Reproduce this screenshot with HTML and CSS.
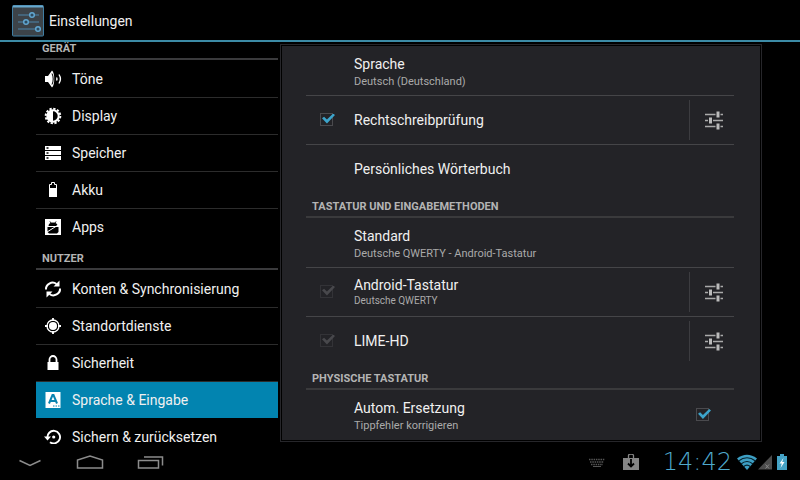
FILE: index.html
```html
<!doctype html>
<html lang="de">
<head>
    <meta charset="UTF-8">
    <meta name="viewport" content="width=device-width, initial-scale=1.0">
    <title>Einstellungen</title>

    <link rel="stylesheet" href="styles.css">
</head>
<body>
    <!-- Shared icon for the settings buttons -->
    <svg class="sprite" width="0" height="0" aria-hidden="true">
        <symbol id="sliders" viewBox="0 0 20 20">
            <path d="M1 4.5h10.500M16.500 4.500H19M1 10.500h3M9 10.500h10M1 16.500h10.500M16.500 16.500H19" stroke="#aaa" stroke-width="1.300"/>
            <path d="M14 1.500v6M6.500 7.500v6M14 13.500v6" stroke="#bbb" stroke-width="3"/>
        </symbol>
    </svg>

    <header class="action-bar">
        <svg class="app-icon" viewBox="0 0 32 32" aria-hidden="true">
            <rect x="0.500" y="0.500" width="31" height="30.500" rx="1" fill="#3c4349" stroke="#3f7ea3"/>
            <path d="M1 1.500h30" stroke="#68a9cd" stroke-width="2"/>
            <path d="M6 10h11M22 10h5M6 17h6M17 17h10M6 24h17" stroke="#4c86ab" stroke-width="1.200"/>
            <g fill="#2d4b60" stroke="#61a6d0" stroke-width="1.500">
                <circle cx="20" cy="10" r="2.300"/>
                <circle cx="14" cy="17" r="2.300"/>
                <circle cx="26" cy="24" r="2.300"/>
            </g>
        </svg>
        <h1>Einstellungen</h1>
    </header>

    <main>
        <nav class="sidebar">
            <h2 class="section-title">GERÄT</h2>
            <ul>
                <li><a href="#toene">
                    <svg class="icon" viewBox="0 0 18 18"><path d="M1 6h3l4-5.500c3 2 3 15 0 17L4 12H1z" fill="#fff"/><path d="M8 3.500c1.600 3 1.600 8 0 11" fill="none" stroke="#000"/><path d="M12.500 7.500c.6 1 .6 2 0 3M15 4.500c1.900 3 1.900 6 0 9" fill="none" stroke="#fff" stroke-width="1.400"/></svg>
                    Töne
                </a></li>
                <li><a href="#display">
                    <svg class="icon" viewBox="0 0 18 18"><circle cx="9" cy="9" r="7.300" fill="none" stroke="#fff" stroke-width="2" stroke-dasharray="2.300 1.522"/><circle cx="9" cy="9" r="5.700" fill="none" stroke="#fff" stroke-width="2"/><path d="M9 3a6 6 0 0 0 0 12z" fill="#fff"/></svg>
                    Display
                </a></li>
                <li><a href="#speicher">
                    <svg class="icon" viewBox="0 0 18 18"><path d="M1 2h16v4H1zM1 7h16v4H1zM1 12h16v4H1z" fill="#fff"/><path d="M2.500 4h2M2.500 9h2M2.500 14h2" stroke="#000" stroke-width="1.500"/></svg>
                    Speicher
                </a></li>
                <li><a href="#akku">
                    <svg class="icon" viewBox="0 0 18 18"><path d="M5.500 15.500v-12h2v-2h3v2h2v12z" fill="none" stroke="#fff"/><path d="M5 7h8v9H5z" fill="#fff"/></svg>
                    Akku
                </a></li>
                <li><a href="#apps">
                    <svg class="icon" viewBox="0 0 18 18"><path d="M1 1h16v16H1z" fill="#fff"/><path d="M4.500 8a4.500 3.500 0 0 1 9 0z" fill="#000"/><path d="M6 3.500l1.500 2M12 3.500l-1.500 2" stroke="#000"/><path d="M3.500 9h11v5l-1.500 1.500H5L3.500 14z" fill="#000"/><path d="M3 14L15 6.500" stroke="#fff"/></svg>
                    Apps
                </a></li>
            </ul>

            <h2 class="section-title">NUTZER</h2>
            <ul>
                <li><a href="#konten">
                    <svg class="icon" viewBox="0 0 18 18"><path d="M2 9.500C1.500 4.500 8 .5 12.500 4M16 8.500c.5 5-6 9-10.500 5.500" fill="none" stroke="#fff" stroke-width="2"/><path d="M15.500.5v6h-6zM2.500 17.500v-6h6z" fill="#fff"/></svg>
                    Konten &amp; Synchronisierung
                </a></li>
                <li><a href="#standort">
                    <svg class="icon" viewBox="0 0 18 18"><circle cx="9" cy="9" r="6" fill="none" stroke="#fff" stroke-width="1.300"/><circle cx="9" cy="9" r="4" fill="#fff"/><path d="M9 1v3M9 14v3M1 9h3M14 9h3" stroke="#fff" stroke-width="1.800"/></svg>
                    Standortdienste
                </a></li>
                <li><a href="#sicherheit">
                    <svg class="icon" viewBox="0 0 18 18"><path d="M3.500 8h11v8h-11z" fill="#fff"/><path d="M5.500 8V5.500a3.500 3.500 0 0 1 7 0V8" fill="none" stroke="#fff" stroke-width="1.800"/></svg>
                    Sicherheit
                </a></li>
                <li><a class="selected" href="#sprache" aria-current="page">
                    <svg class="icon" viewBox="0 0 18 18"><path d="M1.500 1h15v16h-15z" fill="#fff"/><path d="M5 12.500L8.500 4h1l3.500 8.500M6.500 10h5" fill="none" stroke="#0a84b0" stroke-width="2"/><path d="M9 15h1.500M11.500 15h1.500M14 15h1.500" stroke="#0a84b0"/></svg>
                    Sprache &amp; Eingabe
                </a></li>
                <li><a href="#sichern">
                    <svg class="icon" viewBox="0 0 18 18"><path d="M3.500 10A6.300 6.300 0 1 1 6 14.200" fill="none" stroke="#fff" stroke-width="1.900"/><path d="M0 8.500h7L3.500 12.500z" fill="#fff"/><circle cx="9.700" cy="9" r="1.600" fill="#fff"/></svg>
                    Sichern &amp; zurücksetzen
                </a></li>
            </ul>
        </nav>

        <section class="panel">
            <div class="panel-body">
                <div class="row tall">
                    <div class="text">
                        <span class="title">Sprache</span>
                        <span class="summary">Deutsch (Deutschland)</span>
                    </div>
                </div>
                <div class="row">
                    <input type="checkbox" id="spell" checked>
                    <label class="text" for="spell"><span class="title">Rechtschreibprüfung</span></label>
                    <button class="settings" aria-label="Rechtschreibprüfung konfigurieren"><svg><use href="#sliders"/></svg></button>
                </div>
                <div class="row last">
                    <div class="text"><span class="title">Persönliches Wörterbuch</span></div>
                </div>

                <h2 class="section-title">TASTATUR UND EINGABEMETHODEN</h2>
                <div class="row tall">
                    <div class="text">
                        <span class="title">Standard</span>
                        <span class="summary">Deutsche QWERTY - Android-Tastatur</span>
                    </div>
                </div>
                <div class="row">
                    <input type="checkbox" id="android" checked disabled>
                    <label class="text" for="android">
                        <span class="title">Android-Tastatur</span>
                        <span class="summary small">Deutsche QWERTY</span>
                    </label>
                    <button class="settings" aria-label="Android-Tastatur konfigurieren"><svg><use href="#sliders"/></svg></button>
                </div>
                <div class="row last">
                    <input type="checkbox" id="lime" checked disabled>
                    <label class="text" for="lime"><span class="title">LIME-HD</span></label>
                    <button class="settings" aria-label="LIME-HD konfigurieren"><svg><use href="#sliders"/></svg></button>
                </div>

                <h2 class="section-title">PHYSISCHE TASTATUR</h2>
                <div class="row tall last">
                    <label class="text" for="autocorrect">
                        <span class="title">Autom. Ersetzung</span>
                        <span class="summary">Tippfehler korrigieren</span>
                    </label>
                    <input class="end" type="checkbox" id="autocorrect" checked>
                </div>
            </div>
        </section>
    </main>

    <footer class="system-bar">
        <div class="nav-buttons">
            <button aria-label="Zurück"><svg viewBox="0 0 28 16"><path d="M3.500 7.500L14 12.500l10.500-5"/></svg></button>
            <button aria-label="Startseite"><svg viewBox="0 0 28 16"><path d="M1.500 15v-8L14 3l12.500 4v8z"/></svg></button>
            <button aria-label="Letzte Apps"><svg viewBox="0 0 28 16"><path d="M2.500 7.500h20V15h-20zM8 4h18.500v8.500"/></svg></button>
        </div>
        <div class="status">
            <svg class="keyboard" viewBox="0 0 16 10" aria-hidden="true"><path d="M0 2.500h16M1 5h14M2 7.500h12" stroke="#555" stroke-width="1.500" stroke-dasharray="1.500 .8"/><path d="M4 9.500h8" stroke="#555"/></svg>
            <svg class="bag" viewBox="0 0 16 16" aria-hidden="true"><path d="M0 4h16v12H0z" fill="#858585"/><path d="M5.500 4V1.500a2.500 1.500 0 0 1 5 0V4" fill="none" stroke="#858585" stroke-width="1.300"/><path d="M8 5v7M5 9.500l3 3 3-3" fill="none" stroke="#000" stroke-width="1.800"/></svg>
            <time class="clock">14:42</time>
            <svg class="wifi" viewBox="0 0 20 16" aria-hidden="true"><path d="M0 4.500Q10-3 20 4.500L10 16z" fill="#3d9fc4"/><path d="M1.500 7Q10 .500 18.500 7M4 10Q10 5 16 10M6.500 12.800Q10 9.500 13.500 12.800" fill="none" stroke="#06202b" stroke-width="1.200"/></svg>
            <svg class="signal" viewBox="0 0 14 16" aria-hidden="true"><path d="M0 15.500L14 1v14.500z" fill="#4c4c4c"/><path d="M7.500 10.500l3.500 4M11 10.500l-3.500 4" stroke="#888"/></svg>
            <svg class="battery" viewBox="0 0 10 16" aria-hidden="true"><path d="M0 2h3V0h4v2h3v14H0z" fill="#45a3c6"/><path d="M6.500 4L2.500 9.500h2.300L3.500 14l4-6H5.200z" fill="#fff"/></svg>
        </div>
    </footer>
</body>
</html>
```
FILE: styles.css
```css
* {
    box-sizing: border-box;
}

body {
    display: flex;
    flex-direction: column;
    height: 100vh;
    margin: 0;
    background-color: #000;
    color: #f0f0f0;
    font-family: Roboto, "Noto Sans", sans-serif;
    font-size: 14px;
    line-height: 18px;
}

h1, h2, ul {
    margin: 0;
    padding: 0;
}

button {
    padding: 0;
    border: 0;
    background: none;
    cursor: pointer;
}

.sprite {
    position: absolute;
}

.action-bar {
    display: flex;
    align-items: center;
    gap: 5px;
    flex: none;
    height: 42px;
    padding: 2px 12px 0;
    border-bottom: 2px solid #3c8ba6;
}

.action-bar h1 {
    font-size: 14px;
    font-weight: normal;
}

.app-icon {
    width: 32px;
    height: 32px;
}

main {
    display: grid;
    grid-template-columns: 1fr 2fr;
    flex: 1;
    min-height: 0;
    padding: 0 38px 0 36px;
}

/* Category list */
.sidebar {
    overflow: hidden;
}

.sidebar ul {
    list-style: none;
}

.section-title {
    height: 24px;
    padding: 4px 6px 0;
    border-bottom: 2px solid #3a3a3c;
    color: #b4b4b4;
    font-size: 11px;
    font-weight: bold;
}

.sidebar .section-title {
    margin-bottom: 1px;
}

.sidebar .section-title:first-child {
    margin-top: -6px;
}

.sidebar a {
    display: flex;
    align-items: center;
    gap: 10px;
    height: 37px;
    padding: 0 8px;
    border-bottom: 1px solid #2c2c2c;
    color: #f0f0f0;
    text-decoration: none;
}

.sidebar li:last-child a {
    border-bottom-color: transparent;
}

.sidebar a.selected {
    border-bottom-color: #000;
    background-color: #0284b0;
}

.icon {
    flex: none;
    width: 18px;
    height: 18px;
}

/* Detail panel */
.panel {
    margin: 2px 0 2px 2px;
    padding: 1px;
    border: 1px solid #26262a;
    min-height: 0;
}

.panel-body {
    height: 100%;
    padding: 0 26px 0 24px;
    overflow: hidden;
    background-color: #232327;
}

.row {
    display: grid;
    grid-template-columns: 48px 1fr auto;
    align-items: center;
    height: 49px;
    border-bottom: 1px solid #454548;
}

.row.tall {
    height: 50px;
}

.row.last {
    border-bottom-color: transparent;
}

.text {
    grid-column: 2;
    display: flex;
    flex-direction: column;
}

.tall .text {
    padding-top: 4px;
}

.summary {
    color: #aaa;
    font-size: 11px;
    line-height: 18px;
}

.summary.small {
    font-size: 10px;
    line-height: 14px;
}

input[type="checkbox"] {
    appearance: none;
    width: 13px;
    height: 13px;
    margin: 0 0 2px 14px;
    border: 1px solid #4a4a4e;
}

input[type="checkbox"].end {
    margin: 0 25px 0 0;
}

input[type="checkbox"]:checked::before {
    content: "";
    display: block;
    width: 13px;
    height: 10px;
    margin-left: 1px;
    background-color: #3ca4cb;
    clip-path: polygon(0 48%, 16% 32%, 38% 60%, 86% 0, 100% 14%, 38% 100%);
}

input[type="checkbox"]:disabled {
    border-color: #333337;
}

input[type="checkbox"]:disabled::before {
    background-color: #48484c;
}

.settings {
    width: 45px;
    height: 40px;
    padding: 2px 0 0 3px;
    border-left: 1px solid #3c3c40;
}

.settings svg {
    width: 20px;
    height: 20px;
}

/* System bar */
.system-bar {
    display: flex;
    align-items: center;
    justify-content: space-between;
    flex: none;
    height: 36px;
    padding-right: 13px;
}

.nav-buttons {
    display: flex;
}

.nav-buttons button {
    width: 60px;
    height: 36px;
}

.nav-buttons svg {
    width: 28px;
    height: 16px;
    fill: none;
    stroke: #8c8c8c;
    stroke-width: 1.5;
}

.status {
    display: flex;
    align-items: center;
}

.keyboard {
    width: 16px;
    height: 10px;
    margin-right: 18px;
}

.bag {
    width: 16px;
    height: 16px;
    margin-right: 24px;
}

.clock {
    margin-right: 5px;
    color: #4fa9cc;
    font-family: "DejaVu Sans Light", "DejaVu Sans", sans-serif;
    font-size: 24px;
    font-weight: 200;
}

.wifi {
    width: 20px;
    height: 16px;
    margin-right: 1px;
}

.signal {
    width: 14px;
    height: 16px;
    margin-right: 5px;
}

.battery {
    width: 10px;
    height: 16px;
}
```
